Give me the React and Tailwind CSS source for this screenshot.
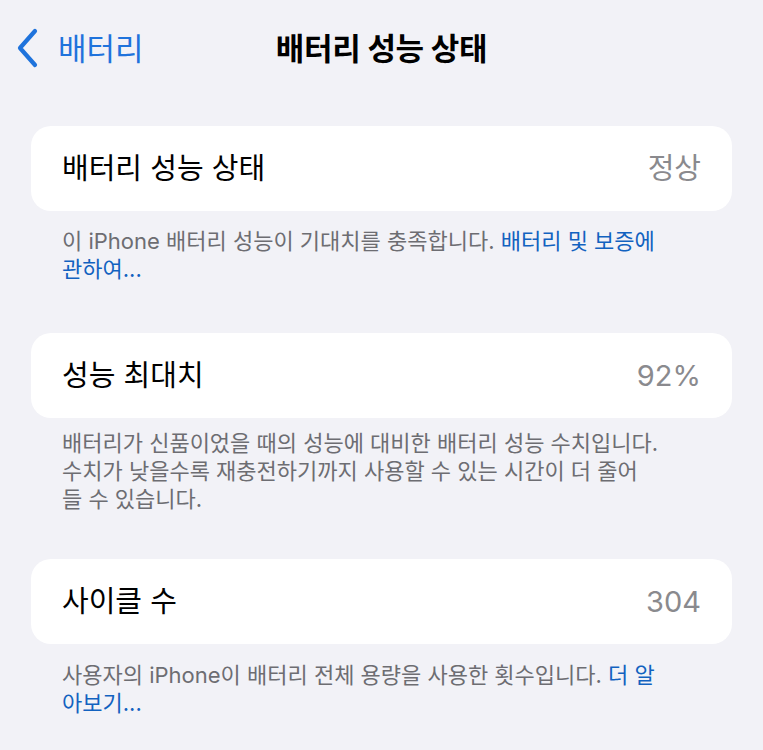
import React from 'react';

const font = { fontFamily: '"Inter", "Noto Sans CJK KR", "Noto Sans", sans-serif' };

const sections = [
    {
        label: '배터리 성능 상태',
        value: '정상',
        spacing: 'pt-[16px] pb-[50px]',
        footer: (
            <>
                이 iPhone 배터리 성능이 기대치를 충족합니다.{' '}
                <span className="text-[#1262c0]">
                    배터리 및 보증에
                    <br />
                    관하여...
                </span>
            </>
        ),
    },
    {
        label: '성능 최대치',
        value: '92%',
        spacing: 'pt-[11px] pb-[46px]',
        footer: (
            <>
                배터리가 신품이었을 때의 성능에 대비한 배터리 성능 수치입니다.
                <br />
                수치가 낮을수록 재충전하기까지 사용할 수 있는 시간이 더 줄어
                <br />
                들 수 있습니다.
            </>
        ),
    },
    {
        label: '사이클 수',
        value: '304',
        spacing: 'pt-[17px] pb-[40px]',
        footer: (
            <>
                사용자의 iPhone이 배터리 전체 용량을 사용한 횟수입니다.{' '}
                <span className="text-[#1262c0]">
                    더 알
                    <br />
                    아보기...
                </span>
            </>
        ),
    },
];

const ChevronLeft = () => (
    <svg width="24" height="40" viewBox="0 0 24 40" fill="none">
        <path d="M20 3 L5 20 L20 37" stroke="#1f73dc" strokeWidth="4.2" strokeLinecap="round" strokeLinejoin="round" />
    </svg>
);

export default function App() {
    return (
        <div className="min-h-screen w-full bg-[#f2f2f7] text-black" style={font}>
            {/* Navigation bar */}
            <header className="grid h-[96px] grid-cols-[1fr_auto_1fr] items-center px-[15px]">
                <div className="flex items-center gap-[19px]">
                    <ChevronLeft />
                    <span className="text-[31px] leading-none text-[#1f73dc]">배터리</span>
                </div>
                <h1 className="text-[31px] font-bold leading-none tracking-[-0.3px]">배터리 성능 상태</h1>
                <div />
            </header>

            {/* Grouped rows */}
            <main className="px-[31px] pt-[30px]">
                {sections.map((s) => (
                    <section key={s.label}>
                        <div className="flex h-[85px] items-center justify-between rounded-[20px] bg-white px-[31px]">
                            <span className="text-[29px] leading-none">{s.label}</span>
                            <span className="text-[29px] leading-none text-[#8a8a8e]">{s.value}</span>
                        </div>
                        <p className={`px-[31px] text-[22px] leading-[28px] text-[#6d6d72] ${s.spacing}`}>{s.footer}</p>
                    </section>
                ))}
            </main>
        </div>
    );
}
